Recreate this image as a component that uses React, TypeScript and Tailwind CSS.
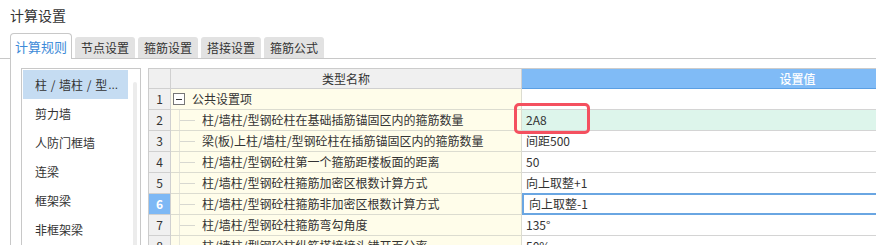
const tabs = ["计算规则", "节点设置", "箍筋设置", "搭接设置", "箍筋公式"];

const menu = ["剪力墙", "人防门框墙", "连梁", "框架梁", "非框架梁"];

const rows = [
  { name: "公共设置项", value: "", group: true },
  { name: "柱/墙柱/型钢砼柱在基础插筋锚固区内的箍筋数量", value: "2A8" },
  { name: "梁(板)上柱/墙柱/型钢砼柱在插筋锚固区内的箍筋数量", value: "间距500" },
  { name: "柱/墙柱/型钢砼柱第一个箍筋距楼板面的距离", value: "50" },
  { name: "柱/墙柱/型钢砼柱箍筋加密区根数计算方式", value: "向上取整+1" },
  { name: "柱/墙柱/型钢砼柱箍筋非加密区根数计算方式", value: "向上取整-1" },
  { name: "柱/墙柱/型钢砼柱箍筋弯勾角度", value: "135°" },
  { name: "柱/墙柱/型钢砼柱纵筋搭接接头错开百分率", value: "50%" },
];

const App = () => {
  return (
    <div
      className="w-[876px] h-[245px] overflow-hidden bg-white text-[#333] text-[12px]"
      style={{ fontFamily: '"Noto Sans CJK SC", "Noto Sans", sans-serif' }}
    >
      <div className="h-[33px] pl-[10px] pt-[6px] text-[14px] leading-[18px]">计算设置</div>

      {/* tabs */}
      <div className="flex items-end gap-[3px] pl-[10px] h-[26px] border-b border-[#c8c8c8]">
        {tabs.map((t, i) =>
          i === 0 ? (
            <div
              key={t}
              className="relative -mb-px h-[26px] w-[62px] flex items-center justify-center bg-white border border-b-0 border-[#c8c8c8] rounded-t-[4px] text-[13px] text-[#3d8ad8]"
            >
              {t}
            </div>
          ) : (
            <div
              key={t}
              className="h-[21px] w-[60px] flex items-center justify-center bg-[#e2e2e2] rounded-t-[3px] text-[#333]"
            >
              {t}
            </div>
          )
        )}
      </div>

      {/* body */}
      <div className="ml-[10px] h-[200px] border-l border-[#c8c8c8] pl-[10px] pt-[9px] flex gap-[7px]">
        {/* left list */}
        <div className="relative w-[120px] h-[200px] shrink-0 border border-[#c8c8c8] p-px">
          <div className="h-[29px] pl-[12px] flex items-center w-[105px] whitespace-nowrap bg-[#c5dcf2] [word-spacing:1px]">
            <span>柱 / 墙柱 / 型</span>
            <span className="ml-px" style={{ fontFamily: '"Liberation Sans", sans-serif' }}>
              ...
            </span>
          </div>
          {menu.map((m) => (
            <div key={m} className="h-[29px] pl-[12px] flex items-center w-[105px] whitespace-nowrap">
              {m}
            </div>
          ))}
          <div className="absolute left-[111px] top-[13px] w-[4px] h-[200px] rounded-full bg-[#ececec]" />
        </div>

        {/* table */}
        <div className="relative w-[925px] shrink-0 border-t border-l border-[#cccccc]">
          <div className="flex h-[20px]">
            <div className="w-[22px] border-r border-b border-[#d0d0d0] bg-[#f0f0f0]" />
            <div className="w-[351px] border-r border-b border-[#d0d0d0] bg-[#f0f0f0] flex items-center justify-center">
              类型名称
            </div>
            <div className="flex-1 border-b border-[#5b9fe3] bg-[#80bbf6] flex items-center justify-center text-white font-medium">
              设置值
            </div>
          </div>
          {rows.map((r, i) => {
            const n = i + 1;
            const sel = n === 6;
            return (
              <div key={n} className="flex h-[21px]">
                <div
                  className={
                    "w-[22px] border-r border-b border-[#d0d0d0] flex items-center justify-center " +
                    (sel ? "bg-[#7db8f5] text-white font-bold" : "bg-[#f0f0f0]")
                  }
                >
                  {n}
                </div>
                <div className="relative w-[351px] border-r border-b border-[#dcdcd0] bg-[#fffdea] flex items-center whitespace-nowrap">
                  {r.group ? (
                    <>
                      <span className="ml-[2px] w-[12px] h-[12px] border border-[#777] bg-white flex items-center justify-center">
                        <span className="w-[6px] h-px bg-[#333]" />
                      </span>
                      <span className="ml-[7px]">{r.name}</span>
                    </>
                  ) : (
                    <>
                      <span className="absolute left-[8px] top-0 bottom-0 w-px bg-[#e6e6dc]" />
                      <span className="ml-[9px] w-[15px] h-px bg-[#d8d8d0]" />
                      <span className="ml-[7px]">{r.name}</span>
                    </>
                  )}
                </div>
                <div
                  className={
                    "flex-1 border-b border-[#d4d4d4] flex items-center whitespace-nowrap " +
                    (n === 2 ? "bg-[#ddf5eb] " : "bg-white ") +
                    (sel ? "relative" : "pl-[4px]")
                  }
                >
                  {sel ? (
                    <div className="absolute inset-x-0 -top-px bottom-[-1px] border-2 border-[#6aa6e2] flex items-center pl-[5px]">
                      {r.value}
                    </div>
                  ) : (
                    r.value
                  )}
                </div>
              </div>
            );
          })}
          <div className="absolute left-[365px] top-[34px] w-[76px] h-[31px] border-[3px] border-[#f4505f] rounded-[5px]" />
        </div>
      </div>
    </div>
  );
};

export default App;
